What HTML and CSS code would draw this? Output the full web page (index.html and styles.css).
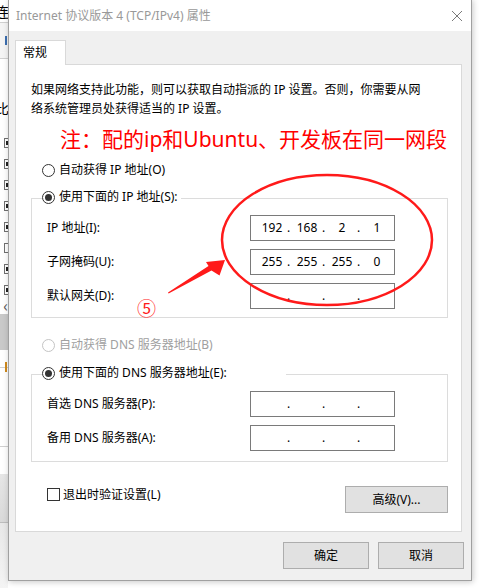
FILE: index.html
```
<!DOCTYPE html>
<html lang="zh-CN">
<head>
<meta charset="utf-8">
<title>Internet 协议版本 4 (TCP/IPv4) 属性</title>
<link rel="stylesheet" href="styles.css">
</head>
<body>
<div class="screen">
  <div class="behind">
    <div class="bh-row bh-top"><span class="bh-char">连</span></div>
    <div class="bh-row bh-blue"><span class="bh-mark"></span></div>
    <div class="bh-row bh-gap"><span class="bh-char">比</span></div>
    <div class="bh-checks">
      <span class="bh-box"></span><span class="bh-box"></span><span class="bh-box"></span><span class="bh-box"></span>
      <span class="bh-box"></span><span class="bh-box empty"></span><span class="bh-box"></span><span class="bh-box"></span>
    </div>
    <div class="bh-row bh-arrow"><span class="bh-char small">&lsaquo;</span></div>
    <div class="bh-band"></div>
    <div class="bh-line1"><span class="bh-orange"></span></div>
    <div class="bh-line2"></div>
    <div class="bh-band2"></div>
    <div class="bh-rest"></div>
  </div>

  <div class="dialog">
    <div class="titlebar">
      <span class="title">Internet 协议版本 4 (TCP/IPv4) 属性</span>
      <svg class="close" width="12" height="12" viewBox="0 0 12 12"><path d="M1 1 L11 11 M11 1 L1 11" stroke="#7a7a7a" stroke-width="1" fill="none"/></svg>
    </div>
    <div class="dbody">
      <div class="tabs"><div class="tab">常规</div></div>
      <div class="panel">
        <p class="desc">如果网络支持此功能，则可以获取自动指派的 IP 设置。否则，你需要从网<br>络系统管理员处获得适当的 IP 设置。</p>
        <p class="note">注：配的ip和Ubuntu、开发板在同一网段</p>
        <div class="radio-row"><span class="radio"></span><span>自动获得 IP 地址(O)</span></div>
        <div class="group g1">
          <div class="legend"><span class="radio on"></span><span>使用下面的 IP 地址(S):</span></div>
          <div class="field first"><span class="label">IP 地址(I):</span>
            <div class="ipbox"><span class="seg">192</span><span class="dot">.</span><span class="seg">168</span><span class="dot">.</span><span class="seg">2</span><span class="dot">.</span><span class="seg">1</span></div>
          </div>
          <div class="field"><span class="label">子网掩码(U):</span>
            <div class="ipbox"><span class="seg">255</span><span class="dot">.</span><span class="seg">255</span><span class="dot">.</span><span class="seg">255</span><span class="dot">.</span><span class="seg">0</span></div>
          </div>
          <div class="field"><span class="label">默认网关(D):</span>
            <div class="ipbox"><span class="seg"></span><span class="dot">.</span><span class="seg"></span><span class="dot">.</span><span class="seg"></span><span class="dot">.</span><span class="seg"></span></div>
          </div>
        </div>
        <div class="radio-row disabled r3"><span class="radio dis"></span><span>自动获得 DNS 服务器地址(B)</span></div>
        <div class="group g2">
          <div class="legend wide"><span class="radio on"></span><span>使用下面的 DNS 服务器地址(E):</span></div>
          <div class="field first"><span class="label">首选 DNS 服务器(P):</span>
            <div class="ipbox"><span class="seg"></span><span class="dot">.</span><span class="seg"></span><span class="dot">.</span><span class="seg"></span><span class="dot">.</span><span class="seg"></span></div>
          </div>
          <div class="field"><span class="label">备用 DNS 服务器(A):</span>
            <div class="ipbox"><span class="seg"></span><span class="dot">.</span><span class="seg"></span><span class="dot">.</span><span class="seg"></span><span class="dot">.</span><span class="seg"></span></div>
          </div>
        </div>
        <div class="check-row">
          <span class="checkbox"></span><span class="check-label">退出时验证设置(L)</span>
          <button class="btn adv">高级(V)...</button>
        </div>
      </div>
      <div class="actions">
        <button class="btn">确定</button>
        <button class="btn">取消</button>
      </div>
    </div>
  </div>

  <svg class="annot" width="479" height="588" viewBox="0 0 479 588">
    <ellipse cx="327" cy="240" rx="105" ry="65" fill="none" stroke="#ff1a1a" stroke-width="2.5"/>
    <polygon points="168,292.5 208.5,266 206,262 225,260 219.5,275.5 211.5,270.5 168.6,293.4" fill="#ff1a1a"/>
  </svg>
  <span class="five">⑤</span>
</div>
</body>
</html>
```

FILE: styles.css
```
html, body {
  margin: 0;
  padding: 0;
}
body {
  width: 479px;
  height: 588px;
  overflow: hidden;
  background: #ffffff;
  font-family: "Noto Sans", "Noto Sans CJK SC", sans-serif;
  font-size: 12px;
  color: #000;
}
.screen {
  position: relative;
  width: 479px;
  height: 588px;
  overflow: hidden;
  background: #ffffff;
}

/* window behind the dialog: only its right 8px are visible */
.behind {
  position: absolute;
  left: -40px;
  top: 0;
  width: 48px;
  height: 588px;
  overflow: hidden;
  background: #ffffff;
  display: flex;
  flex-direction: column;
}
.bh-row {
  display: flex;
  justify-content: flex-end;
  align-items: center;
}
.bh-top {
  height: 22px;
  border-bottom: 1px solid #d0d0d0;
}
.bh-char {
  font-family: "Noto Sans CJK SC", sans-serif;
  font-size: 14px;
  line-height: 16px;
  margin-right: -1px;
}
.bh-char.small {
  color: #555;
  font-size: 16px;
  margin-right: 0;
}
.bh-blue {
  height: 35px;
  background: #f4f4f4;
  border-bottom: 1px solid #d0d0d0;
}
.bh-mark {
  width: 2px;
  height: 9px;
  background: #3c6fb0;
  margin-right: 1px;
}
.bh-gap {
  height: 57px;
  align-items: flex-end;
  padding-bottom: 4px;
}
.bh-checks {
  display: flex;
  flex-direction: column;
  align-items: flex-end;
  gap: 11px;
  padding-top: 18px;
}
.bh-box {
  width: 9px;
  height: 10px;
  border: 1px solid #707070;
  border-right: none;
  box-sizing: border-box;
  margin-right: -5px;
  background: #fff;
  position: relative;
}
.bh-box::after {
  content: "";
  position: absolute;
  left: 1px;
  top: 2px;
  width: 3px;
  height: 4px;
  background: #222;
}
.bh-box.empty::after {
  display: none;
}
.bh-arrow {
  height: 14px;
  margin-top: 3px;
}
.bh-band {
  margin-top: 2px;
  height: 36px;
  background: #c9c9c9;
}
.bh-line1 {
  margin-top: 17px;
  height: 1px;
  background: #d0d0d0;
  position: relative;
}
.bh-orange {
  position: absolute;
  right: 1px;
  top: -5px;
  width: 2px;
  height: 10px;
  background: #d08a1c;
}
.bh-line2 {
  margin-top: 78px;
  height: 1px;
  background: #d0d0d0;
}
.bh-band2 {
  margin-top: 27px;
  height: 48px;
  background: linear-gradient(#e6e6e6, #d9d9d9);
  border-bottom: 1px solid #bdbdbd;
}
.bh-rest {
  flex: 1;
  background: linear-gradient(#e8e8e8, #f4f4f4);
}

/* dialog */
.dialog {
  position: absolute;
  left: 8px;
  top: -1px;
  width: 464px;
  height: 582px;
  box-sizing: border-box;
  border: 1px solid #a0a0a0;
  background: #f0f0f0;
  box-shadow: 1px 1px 6px rgba(0, 0, 0, 0.22);
  display: flex;
  flex-direction: column;
}
.titlebar {
  height: 31px;
  background: #ffffff;
  display: flex;
  align-items: center;
  padding-left: 7px;
  padding-right: 8px;
  flex-shrink: 0;
}
.title {
  flex: 1;
  color: #999999;
  font-size: 12px;
  line-height: 16px;
  padding-top: 1px;
}
.close {
  display: block;
  margin-top: 1px;
}
.dbody {
  display: flex;
  flex-direction: column;
  padding-top: 9px;
}
.tabs {
  display: flex;
  padding-left: 6px;
  position: relative;
  z-index: 1;
}
.tab {
  width: 51px;
  height: 25px;
  box-sizing: border-box;
  border: 1px solid #d9d9d9;
  border-bottom: none;
  background: #ffffff;
  margin-bottom: -1px;
  padding-left: 7px;
  line-height: 23px;
  font-size: 12px;
}
.panel {
  margin-left: 6px;
  width: 447px;
  box-sizing: border-box;
  border: 1px solid #d9d9d9;
  background: #ffffff;
  padding: 15px 13px 18px 15px;
  display: flex;
  flex-direction: column;
}
.desc {
  margin: 0;
  line-height: 19px;
  font-size: 12px;
  white-space: nowrap;
}
.note {
  margin: 7px 0 0 29px;
  color: #ff0000;
  font-size: 21px;
  line-height: 28px;
  white-space: nowrap;
}
.radio-row {
  display: flex;
  align-items: center;
  gap: 4px;
  height: 20px;
  margin: 7px 0 0 11px;
  line-height: 20px;
}
.radio-row.r3 {
  margin-top: 17px;
}
.radio-row.disabled {
  color: #a0a0a0;
}
.radio {
  width: 13px;
  height: 13px;
  box-sizing: border-box;
  border: 1px solid #333333;
  border-radius: 50%;
  background: #ffffff;
  display: flex;
  align-items: center;
  justify-content: center;
  flex-shrink: 0;
}
.radio.on::after {
  content: "";
  width: 7px;
  height: 7px;
  border-radius: 50%;
  background: #333333;
}
.radio.dis {
  border-color: #c4c4c4;
}
.group {
  border: 1px solid #dcdcdc;
  display: flex;
  flex-direction: column;
  padding-left: 15px;
}
.g1 {
  margin-top: 18px;
  padding-bottom: 8px;
}
.g2 {
  margin-top: 19px;
  padding-bottom: 10px;
}
.legend {
  align-self: flex-start;
  margin: -12px 0 0 -5px;
  display: flex;
  align-items: center;
  gap: 4px;
  height: 20px;
  line-height: 20px;
  background: #ffffff;
  padding-right: 3px;
}
.legend.wide {
  padding-right: 59px;
}
.field {
  display: flex;
  align-items: center;
  margin-top: 8px;
}
.label {
  width: 203px;
  line-height: 20px;
  white-space: nowrap;
}
.ipbox {
  width: 145px;
  height: 26px;
  box-sizing: border-box;
  border: 1px solid #7a7a7a;
  display: flex;
  align-items: center;
  padding-left: 6px;
  font-size: 12px;
  line-height: 24px;
}
.seg {
  width: 30px;
  text-align: center;
}
.dot {
  width: 5px;
  text-align: left;
}
.check-row {
  display: flex;
  align-items: flex-start;
  margin-top: 24px;
  padding-left: 16px;
}
.checkbox {
  width: 13px;
  height: 13px;
  box-sizing: border-box;
  border: 1px solid #333333;
  background: #ffffff;
  margin-top: 2px;
  flex-shrink: 0;
}
.check-label {
  margin-left: 3px;
  line-height: 18px;
}
.btn {
  font-family: "Noto Sans", "Noto Sans CJK SC", sans-serif;
  font-size: 12px;
  color: #000;
  background: #e1e1e1;
  border: 1px solid #adadad;
  height: 27px;
  width: 86px;
  padding: 0;
  margin: 0;
  box-sizing: border-box;
  line-height: 25px;
}
.btn.adv {
  margin-left: auto;
  width: 103px;
}
.actions {
  display: flex;
  justify-content: flex-end;
  gap: 9px;
  margin-top: 10px;
  padding-right: 7px;
}

/* annotations drawn over the screenshot */
.annot {
  position: absolute;
  left: 0;
  top: 0;
  pointer-events: none;
}
.five {
  position: absolute;
  left: 137px;
  top: 296px;
  color: #ff1a1a;
  font-family: "Noto Sans CJK SC", sans-serif;
  font-size: 19px;
  line-height: 24px;
}
```
